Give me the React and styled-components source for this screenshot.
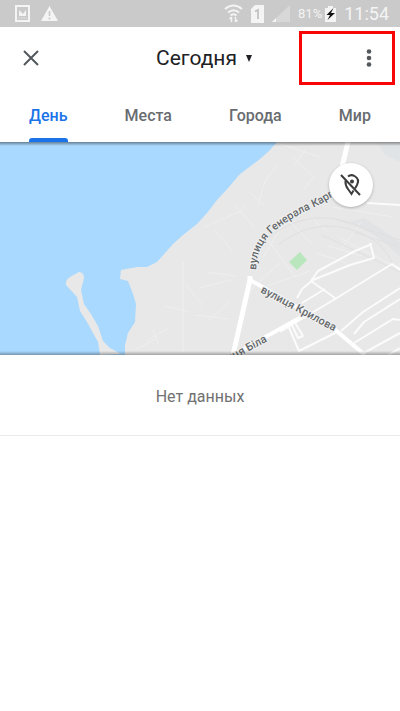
import React from "react";
import styled, { createGlobalStyle } from "styled-components";

const GlobalStyle = createGlobalStyle`
  * { box-sizing: border-box; }
  body {
    margin: 0;
    background: #fff;
    font-family: Roboto, "Noto Sans", sans-serif;
  }
  button { font: inherit; border: 0; background: none; padding: 0; cursor: pointer; }
`;

const Screen = styled.div`
  display: flex;
  flex-direction: column;
  min-height: 100vh;
  background: #fff;
`;

const StatusBar = styled.div`
  display: flex;
  justify-content: space-between;
  align-items: center;
  height: 27px;
  padding: 0 11px 0 15px;
  background: #cacaca;
  color: #f4f4f4;
`;

const StatusGroup = styled.div`
  display: flex;
  align-items: center;
  gap: ${(p) => p.$gap}px;
  svg { display: block; }
`;

const Battery = styled.span`
  font-size: 13px;
`;

const Clock = styled.span`
  font-size: 18px;
`;

const Header = styled.header`
  position: relative;
  display: grid;
  grid-template-columns: 48px 1fr 48px;
  align-items: center;
  height: 62px;
  padding: 0 7px;
`;

const IconButton = styled.button`
  display: grid;
  place-items: center;
  width: 48px;
  height: 48px;
  color: #53585d;
`;

const DateButton = styled.button`
  display: flex;
  align-items: center;
  justify-content: center;
  gap: 9px;
  padding-left: 8px;
  color: #202124;
  font-size: 21px;
  line-height: 28px;
`;

const Highlight = styled.div`
  position: absolute;
  top: 4px;
  right: 5px;
  width: 96px;
  height: 54px;
  border: 3px solid #f80505;
  pointer-events: none;
`;

const Tabs = styled.nav`
  display: flex;
  justify-content: space-between;
  height: 53px;
  padding: 0 29px;
`;

const Tab = styled.button`
  display: flex;
  flex-direction: column;
  justify-content: space-between;
  height: 53px;
  padding-top: 16px;
  color: ${(p) => (p.$active ? "#1a73e8" : "#686c70")};
  font-size: 16px;
  font-weight: 500;
  line-height: 21px;
  &::after {
    content: "";
    width: 100%;
    height: 4px;
    border-radius: 3px 3px 0 0;
    background: ${(p) => (p.$active ? "#1a73e8" : "transparent")};
  }
`;

const MapArea = styled.section`
  position: relative;
  height: 213px;
  overflow: hidden;
  background: #e8e8e8;
  &::after {
    content: "";
    position: absolute;
    inset: 0;
    pointer-events: none;
    background:
      linear-gradient(rgba(0, 0, 0, 0.4), transparent) top / 100% 4px no-repeat,
      linear-gradient(transparent, rgba(0, 0, 0, 0.3)) bottom / 100% 4px no-repeat;
  }
`;

const MapDrawing = styled.svg`
  display: block;
  width: 100%;
  height: 100%;
`;

const LocationButton = styled.button`
  position: absolute;
  top: 21px;
  right: 27px;
  display: grid;
  place-items: center;
  width: 44px;
  height: 44px;
  border-radius: 50%;
  background: #fff;
  color: #3c3c3c;
  box-shadow: 0 1px 3px rgba(0, 0, 0, 0.25);
`;

const EmptyState = styled.p`
  margin: 0;
  padding: 32px 16px 28px;
  border-bottom: 1px solid #e9e9e9;
  color: #717171;
  font-size: 16px;
  line-height: 20px;
  text-align: center;
`;

const tabs = ["День", "Места", "Города", "Мир"];

function PictureIcon() {
  return (
    <svg width="15" height="17" viewBox="0 0 15 17" fill="none" stroke="currentColor">
      <rect x="1" y="1" width="13" height="15" strokeWidth="2" />
      <path d="M4 5v6h7V5L8 9 6 7z" fill="currentColor" stroke="none" />
      <path d="M3 13h9" strokeWidth="1" opacity=".5" />
    </svg>
  );
}

function WarningIcon() {
  return (
    <svg width="17" height="15" viewBox="0 0 17 15">
      <path d="M8.5 0 17 15H0z" fill="currentColor" />
      <path d="M8.5 5v5M8.5 11.5v2" stroke="#cacaca" strokeWidth="1.6" />
    </svg>
  );
}

function WifiIcon() {
  return (
    <svg width="19" height="19" viewBox="0 0 19 19" fill="none" stroke="currentColor" strokeWidth="2">
      <path d="M1 5q8.500-7 17 0M4 8.500q5.500-4.500 11 0M6.500 11.500q3-2.500 6 0" />
      <path d="M7.500 18v-5M5.500 15l2-2 M11.500 13v5M13.500 16l-2 2" strokeWidth="1.500" />
    </svg>
  );
}

function SimIcon() {
  return (
    <svg width="13" height="18" viewBox="0 0 13 18">
      <path d="M4 0h9v18H0V4z" fill="currentColor" />
      <path d="M4 6.500 7 5v9" fill="none" stroke="#c0c0c0" strokeWidth="1.700" />
    </svg>
  );
}

function SignalIcon() {
  return (
    <svg width="18" height="17" viewBox="0 0 18 17">
      <path d="M18 0v17H0z" fill="#d8d8d8" />
      <path d="M4 13v4H0z" fill="currentColor" />
    </svg>
  );
}

function BatteryIcon() {
  return (
    <svg width="11" height="16" viewBox="0 0 11 16">
      <path d="M3 0h5v2h3v14H0V2h3z" fill="currentColor" />
      <path d="m8.500 2-7 7H5l-2.500 5L10 7H6z" fill="#111" />
    </svg>
  );
}

function CityMap() {
  return (
    <MapDrawing viewBox="0 142 400 213" preserveAspectRatio="xMidYMid slice" role="img" aria-label="Карта">
      <rect y="142" width="400" height="213" fill="#e8e8e8" />
      <path
        d="M0 142H277L269 151 260 159 248 168 239 175 229 187 217 200 207 213 197 224 183 235 173 244 165 253 157 262 147 267 137 267 121 270 120 279 128 281 133 294 136 304 135 322 128 333 125 345V355H0Z"
        fill="#a9d9fe"
      />
      <path
        d="M79 272Q84 272 84 278L81 290 84 304 91 314 98 326 103 341 110 348 121 354 100 355 98 342 87 322 80 311 77 297 66 285Q65 280 70 277Z"
        fill="#e8e8e8"
      />
      <path d="M364 218 400 242v12l-19-16-31-16Z" fill="#e1e3e5" />
      <path d="M377 142h23v20l-16-8z" fill="#e1e4e6" />
      <path d="m300 252 7 8-10 10-8-8z" fill="#b9e6bd" />
      <g fill="none" stroke="#efefef" strokeWidth="1">
        <path d="M205 227 241 211 246 205M235 205 255 228M278 164 265 181 258 205M292 157 314 177 303 190M281 144 320 157M214 230 232 250M183 262v90M147 340l24-13M135 350l22-12M165 306l25 6M194 315l35 4M199 288l32-8M206 272l31 4M265 236l31 42M281 228l-18 29M290 222l22 22M313 219l14 13M185 284l18 22M209 320l20-18M245 295l35-32M267 286l43-15M328 246l34 10M317 253l29 10M305 150l-12 17M333 207l60 10M342 239l48 25M361 222l-19 26M248 191l17 15M153 330l6 15" />
      </g>
      <g fill="none" stroke="#e0e0e2" strokeWidth="1">
        <path d="M268 238Q300 213 336 219T400 256M278 245Q310 220 345 228T392 262M335 219 400 240M354 232 400 247M322 235 400 272" />
      </g>
      <g fill="none" stroke="#fbfbfb" strokeWidth="2" strokeLinejoin="round">
        <path d="M367 203 400 205M370 243 374 258 350 265 313 280 302 289 297 298" />
        <path d="M372 244 355 251 318 271 311 281 335 298M400 270 392 264 335 299 280 332M302 303 325 289M391 264l9 5M400 288 363 312 341 331M400 299 364 322 354 334M400 320 393 319 354 343M400 333 362 354M287 323 299 351 337 332M294 321 303 336 298 338 291 323M400 348 388 355" />
      </g>
      <g fill="none" stroke="#fff" strokeLinejoin="round">
        <path d="M348 142 342 167" strokeWidth="5" />
        <path d="M250 276V280L233 355" strokeWidth="5" />
        <path d="M250 280 266 289 333 328 365 355" strokeWidth="4" />
        <path d="M233 355 305 315" strokeWidth="4" />
      </g>
      <defs>
        <path id="street-general" d="M256 270Q257 244 277 229Q294 216 317 206L360 181" />
        <path id="street-krylova" d="M260 292 350 340" />
        <path id="street-bila" d="M229 362 290 329" />
      </defs>
      <g fontFamily="Roboto, sans-serif" fontSize="11" fontWeight="500" fill="#64696c" stroke="#f0f0f0" strokeWidth="2" paintOrder="stroke">
        <text><textPath href="#street-general">вулиця Генерала Карп</textPath></text>
        <text><textPath href="#street-krylova">вулиця Крилова</textPath></text>
        <text><textPath href="#street-bila">иця Біла</textPath></text>
      </g>
    </MapDrawing>
  );
}

export default function App() {
  return (
    <Screen>
      <GlobalStyle />
      <StatusBar>
        <StatusGroup $gap={11}>
          <PictureIcon />
          <WarningIcon />
        </StatusGroup>
        <StatusGroup $gap={8}>
          <WifiIcon />
          <SimIcon />
          <SignalIcon />
          <StatusGroup $gap={3}>
            <Battery>81%</Battery>
            <BatteryIcon />
          </StatusGroup>
          <Clock>11:54</Clock>
        </StatusGroup>
      </StatusBar>
      <Header>
        <IconButton aria-label="Закрыть">
          <svg width="16" height="16" viewBox="0 0 16 16" stroke="currentColor" strokeWidth="2">
            <path d="m1 1 14 14M15 1 1 15" />
          </svg>
        </IconButton>
        <DateButton>
          Сегодня
          <svg width="6" height="7" viewBox="0 0 6 7" fill="currentColor">
            <path d="M0 0h6L3 7z" />
          </svg>
        </DateButton>
        <IconButton aria-label="Ещё">
          <svg width="6" height="18" viewBox="0 0 6 18" fill="currentColor">
            <circle cx="3" cy="2.500" r="2.300" />
            <circle cx="3" cy="9" r="2.300" />
            <circle cx="3" cy="15.500" r="2.300" />
          </svg>
        </IconButton>
        <Highlight />
      </Header>
      <Tabs>
        {tabs.map((name, i) => (
          <Tab key={name} $active={i === 0} aria-current={i === 0 ? "page" : undefined}>
            {name}
          </Tab>
        ))}
      </Tabs>
      <MapArea>
        <CityMap />
        <LocationButton aria-label="Местоположение отключено">
          <svg width="24" height="26" viewBox="0 0 24 26" fill="none" stroke="currentColor" strokeWidth="2">
            <path d="M9 4.500Q12 2 15.500 4Q21 7 18 13L16 16.500M6.500 8.500Q6 13 9 17l3.500 5 2-3.500" />
            <circle cx="13" cy="9.500" r="2" fill="currentColor" stroke="none" />
            <path d="m2 3 19 20" />
          </svg>
        </LocationButton>
      </MapArea>
      <EmptyState>Нет данных</EmptyState>
    </Screen>
  );
}
